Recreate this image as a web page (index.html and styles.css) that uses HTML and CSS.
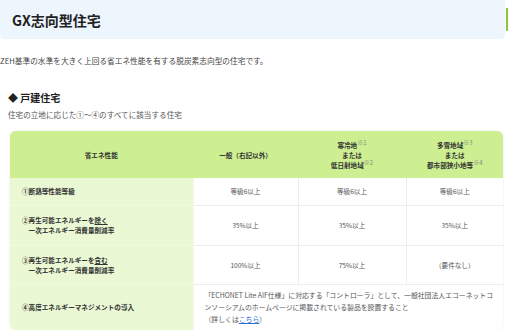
FILE: index.html
```html
<!DOCTYPE html>
<html lang="ja">
<head>
<meta charset="utf-8">
<link rel="stylesheet" href="styles.css">
</head>
<body>
<div class="page">
  <header class="band">
    <h1 class="title">GX志向型住宅</h1>
    <span class="edge"></span>
  </header>
  <p class="lead">ZEH基準の水準を大きく上回る省エネ性能を有する脱炭素志向型の住宅です。</p>
  <h2 class="sub">◆ 戸建住宅</h2>
  <p class="note">住宅の立地に応じた①〜④のすべてに該当する住宅</p>
  <div class="tablewrap">
    <table class="spec">
      <colgroup>
        <col class="c1"><col class="c2"><col class="c3"><col class="c4">
      </colgroup>
      <thead>
        <tr class="r0">
          <th>省エネ性能</th>
          <th>一般（右記以外）</th>
          <th>寒冷地<sup>※1</sup><br>または<br>低日射地域<sup>※2</sup></th>
          <th>多雪地域<sup>※3</sup><br>または<br>都市部狭小地等<sup>※4</sup></th>
        </tr>
      </thead>
      <tbody>
        <tr class="r1">
          <th>①断熱等性能等級</th>
          <td>等級6以上</td>
          <td>等級6以上</td>
          <td>等級6以上</td>
        </tr>
        <tr class="r2">
          <th>②再生可能エネルギーを<u>除く</u><br>　一次エネルギー消費量削減率</th>
          <td>35%以上</td>
          <td>35%以上</td>
          <td>35%以上</td>
        </tr>
        <tr class="r3">
          <th>③再生可能エネルギーを<u>含む</u><br>　一次エネルギー消費量削減率</th>
          <td>100%以上</td>
          <td>75%以上</td>
          <td>（要件なし）</td>
        </tr>
        <tr class="r4">
          <th>④高度エネルギーマネジメントの導入</th>
          <td colspan="3" class="long">「ECHONET Lite AIF仕様」に対応する「コントローラ」として、一般社団法人エコーネットコ<br>ンソーシアムのホームページに掲載されている製品を設置すること<br>（詳しくは<a href="#">こちら</a>）</td>
        </tr>
      </tbody>
    </table>
  </div>
</div>
</body>
</html>
```

FILE: styles.css
```css
* { box-sizing: border-box; }
html, body { margin: 0; padding: 0; background: #fff; }
body {
  font-family: "Noto Sans CJK JP", "Noto Sans", sans-serif;
  color: #444;
  width: 508px;
  overflow: hidden;
}
.page { position: relative; }
.band {
  position: relative;
  background: #eef6fd;
  height: 39px;
  margin-right: 3px;
  border-radius: 0 0 4px 4px;
  display: flex;
  align-items: center;
  padding-left: 12px;
}
.title {
  margin: 0;
  font-size: 14px;
  font-weight: 700;
  color: #222;
  line-height: 1;
}
.edge {
  position: absolute;
  right: -3px;
  top: 8px;
  width: 2px;
  height: 23px;
  background: #8cc63f;
}
.lead {
  margin: 17px 0 0 0;
  font-size: 7.7px;
  line-height: 10px;
  color: #444;
}
.sub {
  margin: 25px 0 0 8px;
  font-size: 10px;
  font-weight: 700;
  color: #222;
  line-height: 14px;
}
.note {
  margin: 5px 0 0 8px;
  font-size: 7.6px;
  line-height: 10px;
  color: #555;
}
.tablewrap {
  margin: 11px 0 0 10px;
  width: 493px;
  border-radius: 6px;
  overflow: hidden;
  box-shadow: 0 0 2px rgba(0,0,0,0.12);
}
.spec {
  width: 100%;
  border-collapse: collapse;
  table-layout: fixed;
  font-size: 6.6px;
  line-height: 10px;
}
.c1 { width: 183px; }
.c2 { width: 105px; }
.c3 { width: 108px; }
.c4 { width: 97px; }
.spec th, .spec td {
  padding: 0 10px;
  border: 1px solid #ececec;
  vertical-align: middle;
}
.spec tr:first-child th, .spec tr:first-child td { border-top: none; }
.spec tr > :first-child { border-left: none; }
.spec tr > :last-child { border-right: none; }
.spec tbody tr:last-child th, .spec tbody tr:last-child td { border-bottom: none; }
.spec thead th {
  background: #cdee91;
  color: #333;
  font-weight: 700;
  text-align: center;
  border-color: #cdee91;
  border-bottom: none;
}
.spec sup {
  font-size: 6px;
  color: #888;
  vertical-align: 3px;
  line-height: 0;
  font-weight: 400;
}
.spec tbody th {
  background: #eaf8d3;
  text-align: left;
  font-weight: 700;
  color: #333;
  padding-left: 12px;
  border-color: #f2fae4;
}
.spec tbody td {
  text-align: center;
  color: #555;
}
.spec u { text-underline-offset: 1px; }
.r0 { height: 47px; }
.r1 { height: 27px; }
.r2 { height: 40px; }
.r3 { height: 39px; }
.r4 { height: 46px; }
.spec td.long {
  text-align: left;
  font-size: 6.85px;
  padding: 0 4px 0 11px;
  line-height: 12px;
}
.long a { color: #2a6fd6; text-decoration: underline; }
```
